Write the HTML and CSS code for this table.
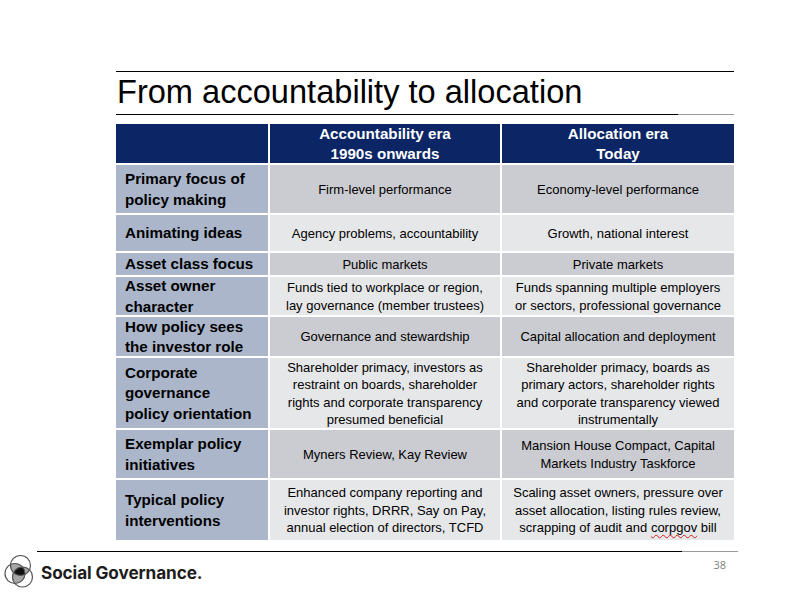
FILE: index.html
```html
<!DOCTYPE html>
<html lang="en">
<head>
<meta charset="utf-8">
<title>From accountability to allocation</title>
<link rel="stylesheet" href="styles.css">
</head>
<body>
<div class="slide">
  <main class="content">
    <h1 class="title">From accountability to allocation</h1>
    <div class="grid">
      <div class="cell head"></div>
      <div class="cell head"><span>Accountability era<br>1990s onwards</span></div>
      <div class="cell head"><span>Allocation era<br>Today</span></div>

      <div class="cell label"><span>Primary focus of policy making</span></div>
      <div class="cell dark"><span>Firm-level performance</span></div>
      <div class="cell dark"><span>Economy-level performance</span></div>

      <div class="cell label"><span>Animating ideas</span></div>
      <div class="cell light"><span>Agency problems, accountability</span></div>
      <div class="cell light"><span>Growth, national interest</span></div>

      <div class="cell label"><span>Asset class focus</span></div>
      <div class="cell dark"><span>Public markets</span></div>
      <div class="cell dark"><span>Private markets</span></div>

      <div class="cell label"><span>Asset owner character</span></div>
      <div class="cell light"><span>Funds tied to workplace or region, lay governance (member trustees)</span></div>
      <div class="cell light"><span>Funds spanning multiple employers or sectors, professional governance</span></div>

      <div class="cell label"><span>How policy sees the investor role</span></div>
      <div class="cell dark"><span>Governance and stewardship</span></div>
      <div class="cell dark"><span>Capital allocation and deployment</span></div>

      <div class="cell label"><span>Corporate governance policy orientation</span></div>
      <div class="cell light"><span>Shareholder primacy, investors as restraint on boards, shareholder rights and corporate transparency presumed beneficial</span></div>
      <div class="cell light"><span>Shareholder primacy, boards as primary actors, shareholder rights and corporate transparency viewed instrumentally</span></div>

      <div class="cell label"><span>Exemplar policy initiatives</span></div>
      <div class="cell dark"><span>Myners Review, Kay Review</span></div>
      <div class="cell dark"><span>Mansion House Compact, Capital Markets Industry Taskforce</span></div>

      <div class="cell label"><span>Typical policy interventions</span></div>
      <div class="cell light"><span>Enhanced company reporting and investor rights, DRRR, Say on Pay, annual election of directors, TCFD</span></div>
      <div class="cell light"><span>Scaling asset owners, pressure over asset allocation, listing rules review, scrapping of audit and <span class="spell">corpgov</span> bill</span></div>
    </div>
  </main>
  <footer class="footer">
    <div class="footer-rule"></div>
    <div class="footer-row">
      <div class="brand">
        <svg class="brand-icon" width="32" height="34" viewBox="0 0 32 34" aria-hidden="true">
          <defs>
            <clipPath id="ca"><circle cx="16.5" cy="11.5" r="10"/></clipPath>
            <clipPath id="cb"><circle cx="11" cy="19.5" r="10"/></clipPath>
          </defs>
          <g clip-path="url(#ca)">
            <circle cx="11" cy="19.5" r="10" fill="#a6a6a6"/>
            <circle cx="18.5" cy="23" r="10" fill="#a6a6a6"/>
          </g>
          <g clip-path="url(#cb)">
            <circle cx="18.5" cy="23" r="10" fill="#a6a6a6"/>
          </g>
          <g clip-path="url(#ca)">
            <g clip-path="url(#cb)">
              <circle cx="18.5" cy="23" r="10" fill="#111"/>
            </g>
          </g>
          <circle cx="16.5" cy="11.5" r="10" fill="none" stroke="#555" stroke-width="1.2"/>
          <circle cx="11" cy="19.5" r="10" fill="none" stroke="#555" stroke-width="1.2"/>
          <circle cx="18.5" cy="23" r="10" fill="none" stroke="#555" stroke-width="1.2"/>
        </svg>
        <span class="brand-name">Social Governance.</span>
      </div>
      <span class="page-num">38</span>
    </div>
  </footer>
</div>
</body>
</html>
```

FILE: styles.css
```css
* { box-sizing: border-box; }

html, body {
  margin: 0;
  padding: 0;
  background: #fff;
}

body {
  width: 788px;
  height: 592px;
  overflow: hidden;
  font-family: "Liberation Sans", Arial, sans-serif;
  color: #000;
}

.slide {
  display: flex;
  flex-direction: column;
  padding-top: 71px;
}

.content {
  margin-left: 116px;
  width: 618px;
}

.title {
  position: relative;
  margin: 0;
  height: 44px;
  border-top: 1px solid #000;
  font-weight: normal;
  font-size: 32.6px;
  line-height: 40px;
  padding-left: 1px;
}

.title::after {
  content: "";
  position: absolute;
  left: 0;
  right: 0;
  bottom: 0;
  height: 1px;
  background: linear-gradient(to right, #000 0, #000 91%, #9a9a9a 91%, #9a9a9a 100%);
}

.grid {
  margin-top: 9px;
  display: grid;
  grid-template-columns: 152px 230px 232px;
  grid-template-rows: 39px 48px 36px 22px 38px 39px 70px 48px 60px;
  gap: 2px;
  background: #fff;
}

.cell {
  display: flex;
  align-items: center;
  justify-content: center;
  text-align: center;
  font-size: 13px;
  line-height: 17.5px;
  padding: 1px 8px 0;
}

.head {
  background: #0b2565;
  color: #fff;
  font-weight: bold;
  font-size: 15.2px;
  line-height: 20px;
  padding-top: 1px;
}

.label {
  background: #abb6ca;
  justify-content: flex-start;
  text-align: left;
  font-weight: bold;
  font-size: 15.2px;
  line-height: 20.5px;
  padding: 1px 12px 0 9px;
  color: #000;
}

.dark { background: #cbccd1; }
.light { background: #e6e7e9; }

.spell {
  text-decoration: underline wavy #d42020;
  text-decoration-thickness: 1px;
  text-underline-offset: 2px;
}

.footer {
  margin-top: 11px;
}

.footer-rule {
  height: 1px;
  margin-left: 37px;
  width: 701px;
  background: linear-gradient(to right, #000 0, #000 92%, #9a9a9a 92%, #9a9a9a 100%);
}

.footer-row {
  display: flex;
  align-items: flex-start;
  padding: 2px 62px 0 4px;
}

.brand {
  display: flex;
  align-items: center;
  gap: 5px;
}

.brand-icon {
  display: block;
  flex: none;
}

.brand-name {
  font-family: Inter, "Noto Sans", sans-serif;
  font-weight: 700;
  font-size: 17.2px;
  color: #1d1d1d;
  letter-spacing: -0.1px;
  padding-top: 2px;
}

.page-num {
  margin-left: auto;
  margin-top: 3px;
  font-family: "Open Sans", "Liberation Sans", sans-serif;
  font-size: 11px;
  color: #7f7f7f;
}
```
